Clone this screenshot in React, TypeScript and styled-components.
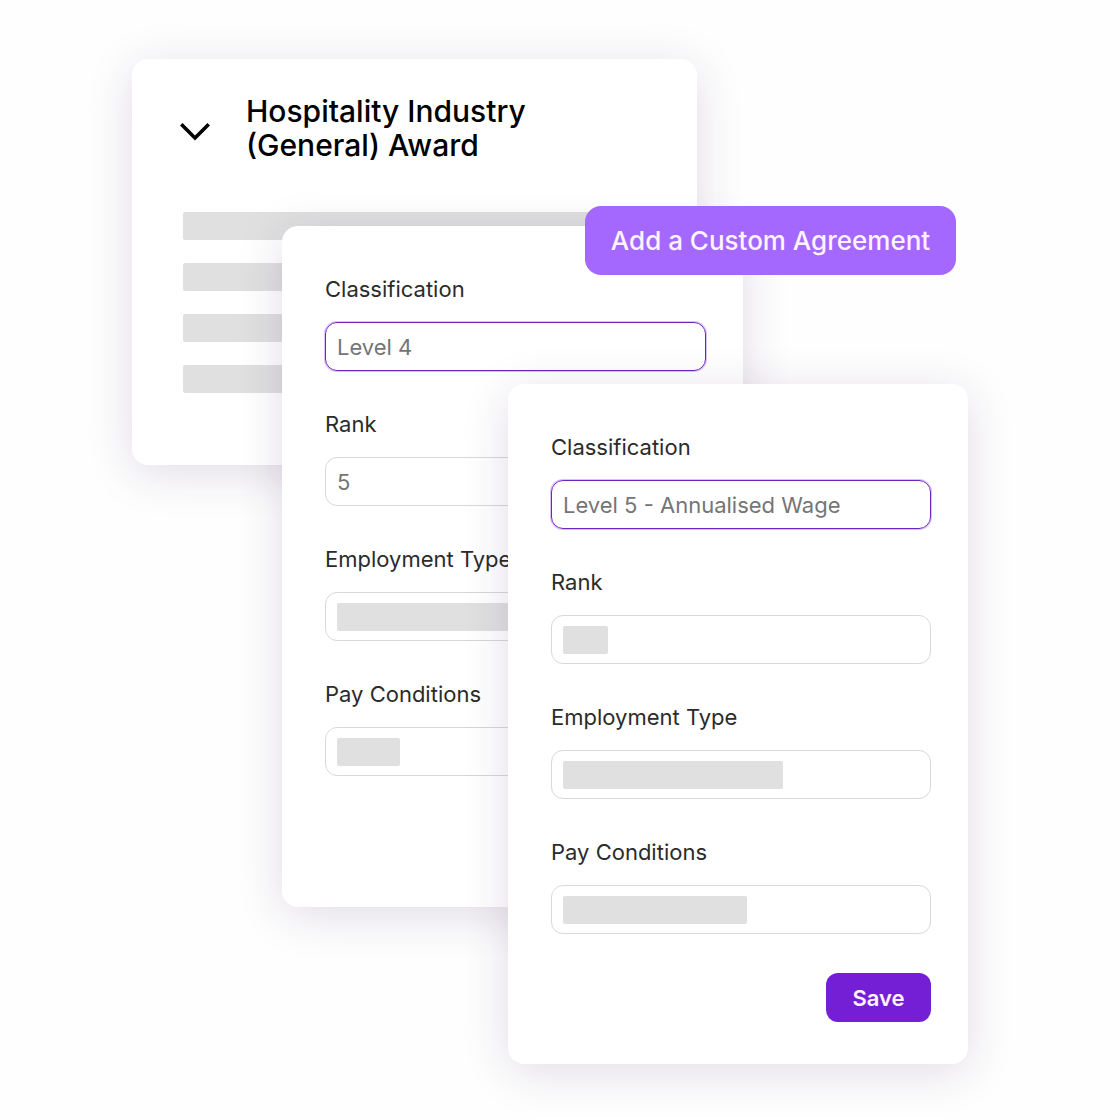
import React, { useId } from "react";
import styled, { createGlobalStyle } from "styled-components";

const GlobalStyle = createGlobalStyle`
  *, *::before, *::after { box-sizing: border-box; }
  body {
    margin: 0;
    background: #fefefe;
    font-family: Inter, "Open Sans", sans-serif;
  }
`;

/* The cards share grid tracks so that each one overlaps the one before it. */
const Stage = styled.main`
  display: grid;
  grid-template-columns:
    minmax(0, 132fr) minmax(0, 150fr) minmax(0, 226fr) minmax(0, 77fr)
    minmax(0, 112fr) minmax(0, 46fr) minmax(0, 213fr) minmax(0, 12fr) minmax(0, 152fr);
  grid-template-rows: 147px 20px 158px auto;
  align-items: start;
  padding: 59px 0 56px;
`;

const Card = styled.section`
  background: #fff;
  border-radius: 16px;
  box-shadow: 0 8px 48px rgba(50, 15, 80, 0.14);
`;

const AwardCard = styled(Card)`
  grid-area: 1 / 2 / -1 / 6;
  padding: 35px 48px 72px;
`;

const AwardHeader = styled.header`
  display: flex;
  align-items: center;
  gap: 36px;
  margin-bottom: 50px;
`;

const ToggleButton = styled.button`
  display: flex;
  padding: 0;
  border: 0;
  background: none;
  color: #000;
  cursor: pointer;
`;

const AwardTitle = styled.h1`
  margin: 0;
  max-width: 300px;
  font-size: 30px;
  font-weight: 500;
  line-height: 34px;
  color: #000;
`;

const AwardLines = styled.div`
  display: grid;
  gap: 23px;
  padding-left: 3px;
`;

const Skeleton = styled.span<{ $width?: string }>`
  display: block;
  flex: none;
  width: ${({ $width = "100%" }) => $width};
  height: 28px;
  border-radius: 2px;
  background: #e0e0e0;
`;

const FormCard = styled(Card).attrs({ as: "form" })<{ $front?: boolean }>`
  grid-area: ${({ $front }) => ($front ? "4 / 4 / -1 / 9" : "3 / 3 / -1 / 7")};
  display: flex;
  flex-direction: column;
  gap: 39px;
  padding: 51px 37px ${({ $front }) => ($front ? "42px" : "131px")} 43px;
`;

const Fields = styled.div`
  display: flex;
  flex-direction: column;
  gap: 41px;
`;

const FieldGroup = styled.div`
  display: flex;
  flex-direction: column;
  gap: 21px;
`;

const Label = styled.label`
  font-size: 22px;
  line-height: 24px;
  color: #2b2b2b;
`;

const InputBox = styled.div<{ $active?: boolean }>`
  display: flex;
  align-items: center;
  height: 49px;
  padding: 0 11px;
  border: 1px solid ${({ $active }) => ($active ? "#6f23c0" : "#d8d8d8")};
  border-radius: 12px;
  box-shadow: ${({ $active }) => ($active ? "0 0 0 1px rgba(150, 80, 230, 0.35)" : "none")};
`;

const Input = styled.input`
  flex: 1;
  min-width: 0;
  padding: 0;
  border: 0;
  outline: 0;
  background: transparent;
  font: inherit;
  font-size: 22px;
  line-height: 28px;
  color: #757575;
`;

const AddButton = styled.button`
  grid-area: 2 / 5 / 4 / 8;
  z-index: 1;
  height: 69px;
  padding: 0;
  border: 0;
  border-radius: 16px;
  background: #a468ff;
  color: #fff3ff;
  font: inherit;
  font-size: 26px;
  font-weight: 500;
  white-space: nowrap;
  cursor: pointer;
`;

const SaveButton = styled.button`
  align-self: flex-end;
  width: 105px;
  height: 49px;
  padding: 0;
  border: 0;
  border-radius: 12px;
  background: #741fd6;
  color: #fff3ff;
  font: inherit;
  font-size: 22px;
  font-weight: 600;
  cursor: pointer;
`;

type FieldProps = { label: string; value?: string; placeholderWidth?: string; active?: boolean };

function Field({ label, value, placeholderWidth, active }: FieldProps) {
  const id = useId();
  return (
    <FieldGroup>
      <Label htmlFor={id}>{label}</Label>
      <InputBox $active={active}>
        {placeholderWidth && <Skeleton $width={placeholderWidth} />}
        <Input id={id} type="text" defaultValue={value} />
      </InputBox>
    </FieldGroup>
  );
}

export default function App() {
  return (
    <>
      <GlobalStyle />
      <Stage>
        <AwardCard>
          <AwardHeader>
            <ToggleButton type="button" aria-label="Toggle award">
              <svg width="30" height="30" viewBox="0 0 30 30" fill="none" stroke="currentColor" strokeWidth="3.6">
                <path d="M1.3 11.3 15 25 28.7 11.3" />
              </svg>
            </ToggleButton>
            <AwardTitle>Hospitality Industry (General) Award</AwardTitle>
          </AwardHeader>
          <AwardLines>
            <Skeleton />
            <Skeleton />
            <Skeleton />
            <Skeleton />
          </AwardLines>
        </AwardCard>
        <FormCard>
          <Fields>
            <Field label="Classification" value="Level 4" active />
            <Field label="Rank" value="5" />
            <Field label="Employment Type" placeholderWidth="220px" />
            <Field label="Pay Conditions" placeholderWidth="63px" />
          </Fields>
        </FormCard>
        <FormCard $front>
          <Fields>
            <Field label="Classification" value="Level 5 - Annualised Wage" active />
            <Field label="Rank" placeholderWidth="45px" />
            <Field label="Employment Type" placeholderWidth="220px" />
            <Field label="Pay Conditions" placeholderWidth="184px" />
          </Fields>
          <SaveButton type="button">Save</SaveButton>
        </FormCard>
        <AddButton type="button">Add a Custom Agreement</AddButton>
      </Stage>
    </>
  );
}
